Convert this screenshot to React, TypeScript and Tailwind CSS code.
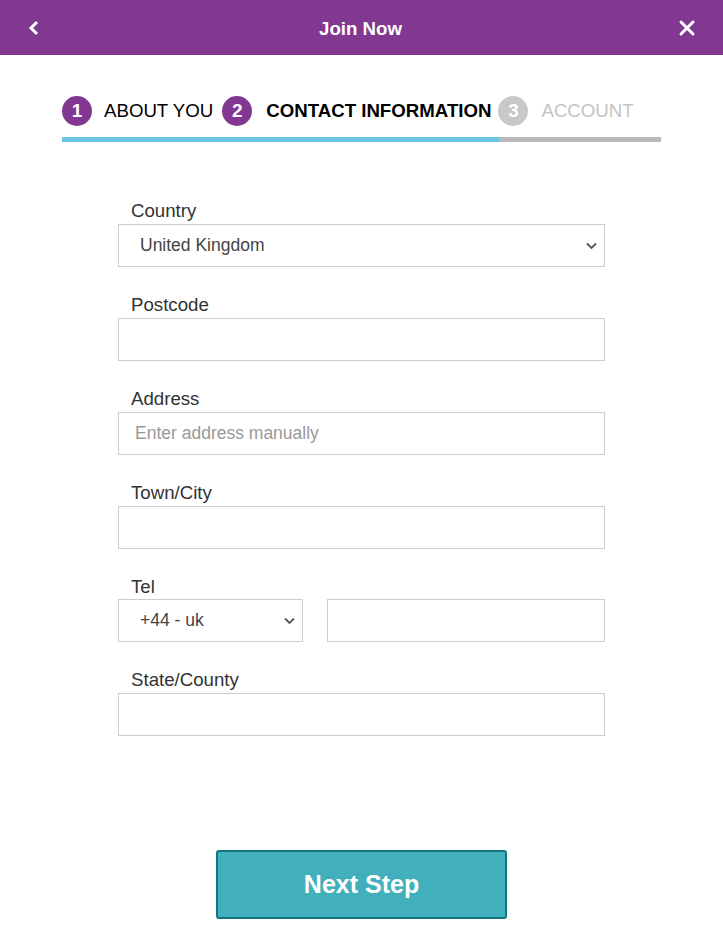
import { X } from "lucide-react";

const font = { fontFamily: '"Liberation Sans", Arial, sans-serif' };

function Chevron() {
  return (
    <svg width="11" height="7" viewBox="0 0 11 7" className="pointer-events-none absolute top-1/2 right-[8px] -translate-y-1/2">
      <path d="M1 1 L5.5 5.5 L10 1" fill="none" stroke="#555" strokeWidth="1.8" />
    </svg>
  );
}

function Step({ n, label, state, className }: { n: number; label: string; state: "done" | "active" | "todo"; className?: string }) {
  const circle = state === "todo" ? "bg-[#c8c8c8]" : "bg-[#823790]";
  const text =
    state === "active" ? "font-bold text-black" : state === "done" ? "text-black" : "text-[#c4c4c4]";
  return (
    <div className={"flex items-center " + (className ?? "")}>
      <span className={"flex h-[30px] w-[30px] items-center justify-center rounded-full text-[19px] font-bold text-white " + circle}>
        {n}
      </span>
      <span className={"text-[18.67px] leading-[22px] " + text}>{label}</span>
    </div>
  );
}

function Field({ label, children }: { label: string; children: React.ReactNode }) {
  return (
    <div className="mb-[27px]">
      <label className="mb-[3px] block h-[21px] pl-[13px] text-[18.67px] leading-[21px] text-[#333]">{label}</label>
      {children}
    </div>
  );
}

const box = "block h-[43px] w-full border border-[#ccc] bg-white text-[17.5px] outline-none";

export default function App() {
  return (
    <div className="min-h-[939px] bg-white" style={font}>
      <header className="flex h-[55px] items-center justify-between bg-[#823790] px-[28px] text-white">
        <svg width="12" height="16" viewBox="0 0 12 16">
          <path d="M9 2 L3 8 L9 14" fill="none" stroke="white" strokeWidth="3" />
        </svg>
        <h1 className="mt-[2px] ml-[6px] text-[18.67px] font-bold">Join Now</h1>
        <X className="mr-[-4px] h-[24px] w-[24px]" strokeWidth={3} />
      </header>

      <div className="mx-auto mt-[41px] w-[599px]">
        <div className="flex items-center">
          <Step n={1} label="ABOUT YOU" state="done" className="gap-[12px]" />
          <Step n={2} label="CONTACT INFORMATION" state="active" className="ml-[9px] gap-[14px]" />
          <Step n={3} label="ACCOUNT" state="todo" className="ml-[7px] gap-[13px]" />
        </div>
        <div className="mt-[11px] flex h-[5px]">
          <div className="w-[437px] bg-[#6bc3e1]" />
          <div className="flex-1 bg-[#bababa]" />
        </div>
      </div>

      <form className="mx-auto mt-[58px] w-[487px] text-[18.67px]">
        <Field label="Country">
          <div className="relative">
            <select className={box + " appearance-none pl-[21px] text-[#444]"} defaultValue="uk">
              <option value="uk">United Kingdom</option>
            </select>
            <Chevron />
          </div>
        </Field>
        <Field label="Postcode">
          <input className={box + " px-[16px]"} />
        </Field>
        <Field label="Address">
          <input className={box + " px-[16px] placeholder:text-[#999]"} placeholder="Enter address manually" />
        </Field>
        <Field label="Town/City">
          <input className={box + " px-[16px]"} />
        </Field>
        <div className="mb-[27px]">
          <label className="mb-[2px] block h-[21px] pl-[13px] text-[18.67px] leading-[21px] text-[#333]">Tel</label>
          <div className="flex gap-[24px]">
            <div className="relative w-[185px]">
              <select className={box + " appearance-none pl-[21px] text-[#444]"} defaultValue="44">
                <option value="44">+44 - uk</option>
              </select>
              <Chevron />
            </div>
            <input className={box + " flex-1 px-[16px]"} />
          </div>
        </div>
        <Field label="State/County">
          <input className={box + " px-[16px]"} />
        </Field>
      </form>

      <div className="mt-[114px] flex justify-center">
        <button className="h-[69px] w-[291px] rounded-[3px] border-2 border-[#137482] bg-[#41b0bc] text-[25px] font-bold text-white">
          Next Step
        </button>
      </div>
    </div>
  );
}
